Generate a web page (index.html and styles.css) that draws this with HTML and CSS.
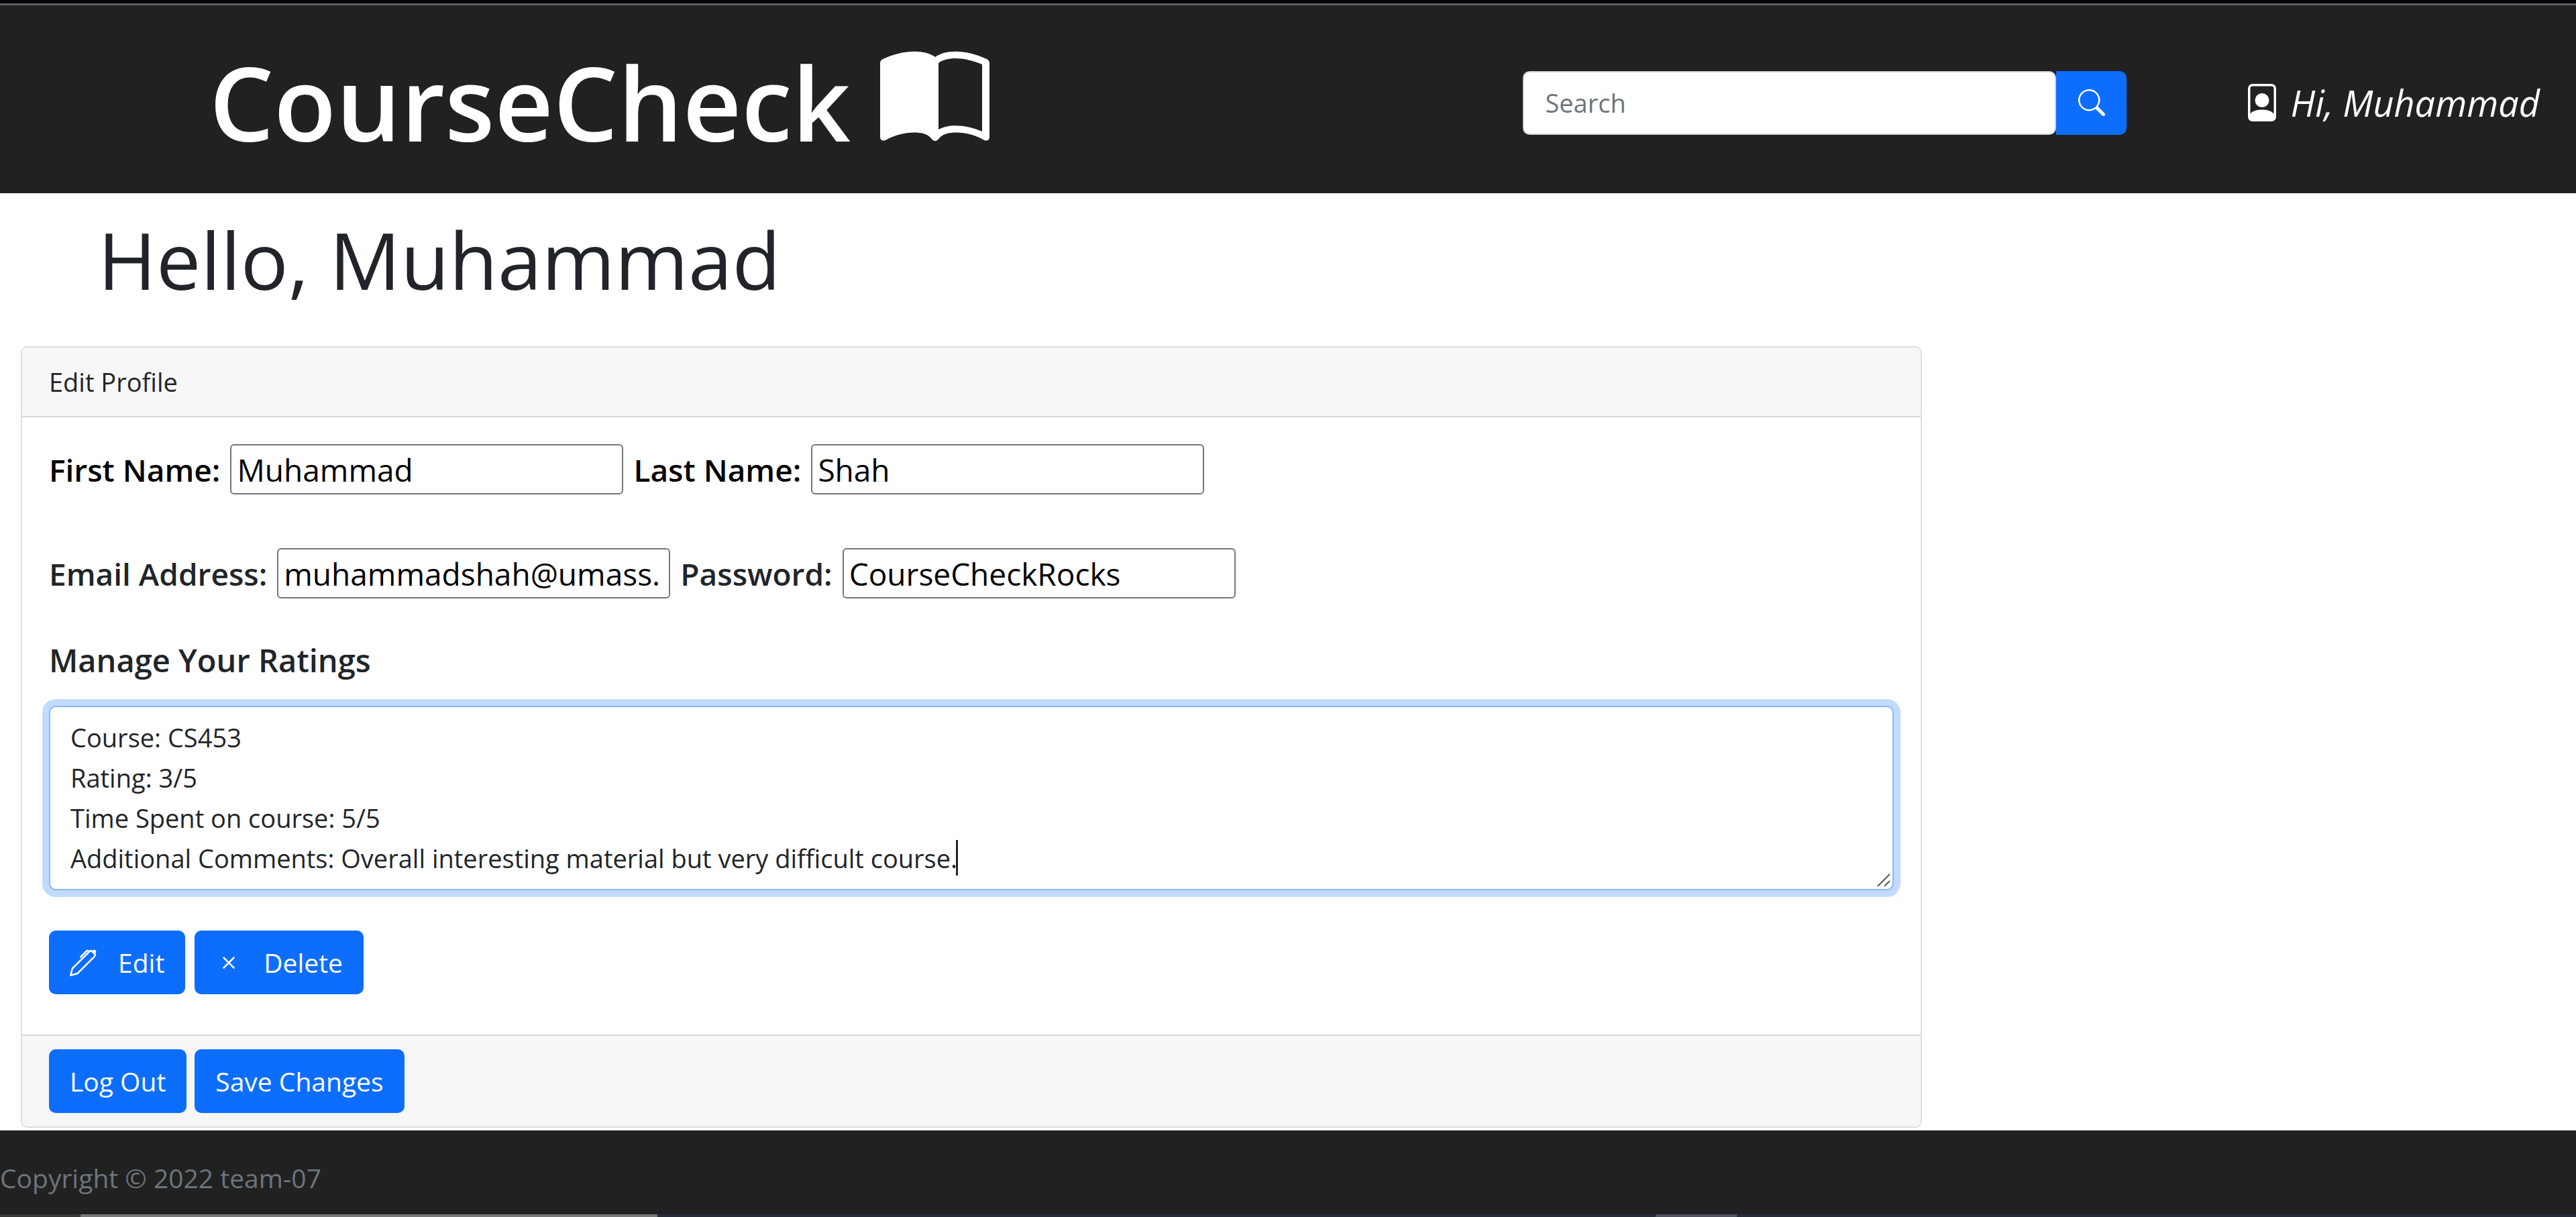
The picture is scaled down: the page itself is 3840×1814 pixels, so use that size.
FILE: index.html
```html
<!DOCTYPE html>
<html lang="en">
<head>
<meta charset="utf-8">
<title>CourseCheck</title>
<link rel="stylesheet" href="styles.css">
</head>
<body>
<div class="edge-top"></div>
<header class="site-header">
  <a class="brand" href="#">CourseCheck
    <svg class="brand-icon" viewBox="0 0 163 134" aria-hidden="true"><path fill="#fff" fill-rule="evenodd" d="M82 9C66-3 34-2 4 12Q0 14 0 18V129Q1 135 8 133C28 121 62 117 74 128Q80 135 82 134Q84 135 90 128C102 117 137 121 155 133Q162 135 163 129V18Q163 14 159 12C129-2 98-3 82 9ZM87 18C101 7 129 10 152 20V120C129 110 103 108 87 117Z"/></svg>
  </a>
  <form class="search" role="search">
    <input class="search-input" type="search" placeholder="Search" aria-label="Search">
    <button class="search-button" type="button" aria-label="Search">
      <svg class="icon" viewBox="0 0 16 16" fill="currentColor"><path d="M11.742 10.344a6.500 6.500 0 1 0-1.397 1.398h-.001c.03.04.062.078.098.115l3.850 3.850a1 1 0 0 0 1.415-1.414l-3.850-3.850a1.007 1.007 0 0 0-.115-.1zM12 6.500a5.500 5.500 0 1 1-11 0 5.500 5.500 0 0 1 11 0z"/></svg>
    </button>
  </form>
  <a class="user" href="#">
    <svg class="user-icon" viewBox="0 0 16 16" fill="currentColor" aria-hidden="true"><path d="M11 7a3 3 0 1 1-6 0 3 3 0 0 1 6 0z"/><path d="M2 2a2 2 0 0 1 2-2h8a2 2 0 0 1 2 2v12a2 2 0 0 1-2 2H4a2 2 0 0 1-2-2V2zm2-1a1 1 0 0 0-1 1v10.755S4 11 8 11s5 1.755 5 1.755V2a1 1 0 0 0-1-1H4z"/></svg>
    Hi, Muhammad
  </a>
</header>
<main>
  <h1 class="greeting">Hello, Muhammad</h1>
  <form class="card">
    <div class="card-header">Edit Profile</div>
    <div class="card-body">
      <div class="field-row strong">
        <label for="first">First Name:</label><input class="field" id="first" type="text" value="Muhammad">
        <label for="last">Last Name:</label><input class="field" id="last" type="text" value="Shah">
      </div>
      <div class="field-row">
        <label for="email">Email Address:</label><input class="field" id="email" type="text" value="muhammadshah@umass.edu">
        <label for="password">Password:</label><input class="field" id="password" type="text" value="CourseCheckRocks">
      </div>
      <label class="ratings-label" for="ratings">Manage Your Ratings</label>
      <div class="ratings-box">
        <textarea class="ratings" id="ratings" rows="4">Course: CS453
Rating: 3/5
Time Spent on course: 5/5
Additional Comments: Overall interesting material but very difficult course.</textarea>
        <span class="caret" aria-hidden="true"></span>
        <svg class="grip" viewBox="0 0 20 20" stroke="#555" stroke-width="2" aria-hidden="true"><path d="M1 19L19 1M11 19L19 11"/></svg>
      </div>
      <div class="actions">
        <button class="btn btn-icon" type="button"><svg class="icon" viewBox="0 0 16 16" fill="currentColor" aria-hidden="true"><path d="m13.498.795.149-.149a1.207 1.207 0 1 1 1.707 1.708l-.149.148a1.500 1.500 0 0 1-.059 2.059L4.854 14.854a.5.5 0 0 1-.233.131l-4 1a.5.5 0 0 1-.606-.606l1-4a.5.5 0 0 1 .131-.232l9.642-9.642a.5.5 0 0 0-.642.056L6.854 4.854a.5.5 0 1 1-.708-.708L9.440.854A1.500 1.500 0 0 1 11.500.796a1.500 1.500 0 0 1 1.998-.001zm-.644.766a.5.5 0 0 0-.707 0L1.950 11.756l-.764 3.057 3.057-.764L14.440 3.854a.5.5 0 0 0 0-.708l-1.585-1.585z"/></svg>Edit</button>
        <button class="btn btn-icon" type="button"><svg class="icon" viewBox="0 0 16 16" fill="currentColor" aria-hidden="true"><path d="M4.646 4.646a.5.5 0 0 1 .708 0L8 7.293l2.646-2.647a.5.5 0 0 1 .708.708L8.707 8l2.647 2.646a.5.5 0 0 1-.708.708L8 8.707l-2.646 2.647a.5.5 0 0 1-.708-.708L7.293 8 4.646 5.354a.5.5 0 0 1 0-.708z"/></svg>Delete</button>
      </div>
    </div>
    <div class="card-footer">
      <button class="btn" type="button">Log Out</button>
      <button class="btn" type="button">Save Changes</button>
    </div>
  </form>
</main>
<footer class="site-footer">Copyright © 2022 team-07</footer>
<div class="edge-bottom"></div>
</body>
</html>
```
FILE: styles.css
```css
* { box-sizing: border-box; }
body {
  margin: 0;
  min-height: 100vh;
  display: flex;
  flex-direction: column;
  background: #fff;
  color: #212529;
  font: 400 38px/60px "Open Sans", "Noto Sans", sans-serif;
}
input, button, textarea { font: inherit; }
.edge-top { height: 8px; background: #05060a; border-bottom: 3px solid #5f5f66; }
.site-header {
  display: flex;
  align-items: center;
  height: 280px;
  padding: 10px 54px 0 312px;
  background: #212121;
  color: #fff;
}
.brand {
  display: flex;
  align-items: center;
  gap: 44px;
  margin-right: auto;
  color: #fff;
  font-size: 152px;
  font-weight: 600;
  line-height: 192px;
  text-decoration: none;
}
.brand-icon { width: 163px; height: 134px; margin-bottom: 20px; }
.search { display: flex; width: 900px; margin-right: 174px; }
.search-input {
  flex: 1;
  min-width: 0;
  height: 95px;
  padding: 0 31px;
  border: 2px solid #ced4da;
  border-radius: 10px;
  background: #fff;
}
.search-input::placeholder { color: #6c757d; opacity: 1; }
.search-button {
  display: flex;
  align-items: center;
  justify-content: center;
  width: 105px;
  height: 95px;
  padding: 0;
  border: 0;
  border-radius: 0 10px 10px 0;
  background: #0d6efd;
  color: #fff;
}
.icon { width: 40px; height: 40px; }
.user {
  display: flex;
  align-items: center;
  gap: 14px;
  color: #fff;
  font-size: 54px;
  font-style: italic;
  text-decoration: none;
}
.user-icon { width: 56px; height: 56px; }
.greeting {
  margin: 0;
  padding: 24px 0 54px 146px;
  font-size: 118px;
  font-weight: 400;
  line-height: 150px;
}
.card {
  width: 2834px;
  max-width: calc(100% - 62px);
  margin: 0 31px 4px;
  border: 2px solid #dfdfdf;
  border-radius: 10px;
}
.card-header { padding: 21px 40px; background: #f7f7f7; border-bottom: 2px solid #d8d8d8; border-radius: 8px 8px 0 0; }
.card-body { padding: 40px; }
.field-row {
  display: flex;
  align-items: center;
  gap: 15px;
  margin-bottom: 80px;
  font-size: 46px;
  font-weight: 600;
}
.field-row + .ratings-label { margin-top: -18px; }
.strong { color: #000; }
.field {
  width: 586px;
  height: 75px;
  padding: 0 14px 0 8px;
  border: 2px solid #767676;
  border-radius: 6px;
  background: #fff;
  color: #000;
  font-weight: 400;
}
.ratings-label { display: block; font-size: 47px; font-weight: 600; }
.ratings-box { position: relative; margin-top: 38px; }
.ratings {
  display: block;
  width: 100%;
  height: 275px;
  padding: 15px 30px;
  border: 2px solid #86b7fe;
  border-radius: 10px;
  outline: 0;
  box-shadow: 0 0 0 10px #c2dbff;
  color: #212529;
  resize: none;
  overflow: hidden;
}
.caret { position: absolute; left: 1352px; bottom: 22px; width: 3px; height: 53px; background: #212529; }
.grip { position: absolute; right: 5px; bottom: 5px; width: 20px; height: 20px; }
.actions { display: flex; gap: 14px; margin: 60px 0 20px; }
.btn {
  height: 95px;
  padding: 0 31px;
  border: 0;
  border-radius: 10px;
  background: #0d6efd;
  color: #fff;
  font-size: 39px;
}
.btn-icon { display: flex; align-items: center; gap: 32px; }
.card-footer { display: flex; gap: 12px; padding: 20px 40px; background: #f7f7f7; border-top: 2px solid #d8d8d8; border-radius: 0 0 8px 8px; }
.site-footer { flex: 1; padding: 41px 0 23px; background: #212121; color: #6c757d; font-size: 39px; }
.edge-bottom { height: 4px; background: linear-gradient(90deg, #3a3835 120px, #777 120px 980px, #252b37 980px 2468px, #50545e 2468px 2589px, #252b37 2589px); }
```
